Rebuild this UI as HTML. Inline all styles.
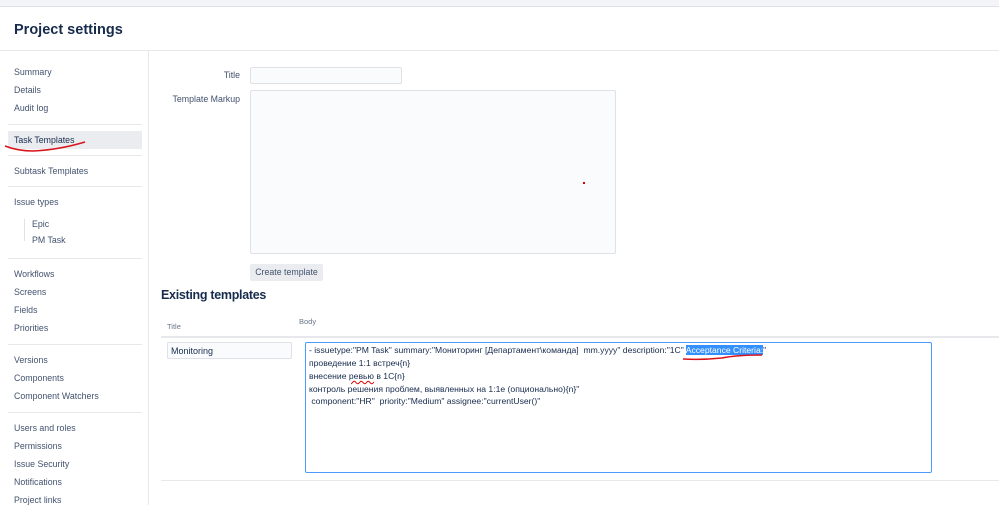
<!DOCTYPE html>
<html><head><meta charset="utf-8"><style>
*{margin:0;padding:0;box-sizing:border-box}
body{width:999px;height:505px;overflow:hidden;background:#fff;font-family:"Liberation Sans","Noto Sans CJK SC",sans-serif;color:#42526e;position:relative}
.a{position:absolute;white-space:nowrap}
.s{font-size:8.8px;color:#42526e;left:14px}
.hr{position:absolute;height:1px;background:#e6e8ec}
.lbl{font-size:8.8px;color:#42526e;text-align:right;width:100px}
.bt{font-size:8.6px;color:#172b4d;left:309px}
</style></head><body>
<div class="a" style="left:0;top:0;width:999px;height:6px;background:#f4f5f7"></div>
<div class="hr" style="left:0;top:6px;width:999px;background:#dfe1e6"></div>
<div class="a" style="left:14px;top:22px;font-size:14.5px;font-weight:bold;color:#172b4d">Project settings</div>
<div class="hr" style="left:0;top:50px;width:999px"></div>
<div class="a" style="left:148px;top:51px;width:1px;height:454px;background:#e6e8ec"></div>

<div class="a s" style="top:67px">Summary</div>
<div class="a s" style="top:85px">Details</div>
<div class="a s" style="top:103px">Audit log</div>
<div class="hr" style="left:8px;top:124px;width:134px"></div>
<div class="a" style="left:8px;top:131px;width:134px;height:18px;background:#ebecf0"></div>
<div class="a s" style="top:135px;color:#172b4d">Task Templates</div>
<svg class="a" style="left:3px;top:139px" width="85" height="16"><path d="M2 7 Q15 12 30 12 Q55 11 82 3" stroke="#d8141b" stroke-width="1.5" fill="none"/></svg>
<div class="hr" style="left:8px;top:155px;width:134px"></div>
<div class="a s" style="top:166px">Subtask Templates</div>
<div class="hr" style="left:8px;top:186px;width:134px"></div>
<div class="a s" style="top:197px">Issue types</div>
<div class="a" style="left:24px;top:219px;width:1px;height:22px;background:#dfe1e6"></div>
<div class="a s" style="left:32px;top:219px">Epic</div>
<div class="a s" style="left:32px;top:235px">PM Task</div>
<div class="hr" style="left:8px;top:258px;width:134px"></div>
<div class="a s" style="top:269px">Workflows</div>
<div class="a s" style="top:287px">Screens</div>
<div class="a s" style="top:305px">Fields</div>
<div class="a s" style="top:323px">Priorities</div>
<div class="hr" style="left:8px;top:344px;width:134px"></div>
<div class="a s" style="top:355px">Versions</div>
<div class="a s" style="top:373px">Components</div>
<div class="a s" style="top:391px">Component Watchers</div>
<div class="hr" style="left:8px;top:412px;width:134px"></div>
<div class="a s" style="top:423px">Users and roles</div>
<div class="a s" style="top:441px">Permissions</div>
<div class="a s" style="top:459px">Issue Security</div>
<div class="a s" style="top:477px">Notifications</div>
<div class="a s" style="top:495px">Project links</div>

<div class="a lbl" style="left:140px;top:70px">Title</div>
<div class="a" style="left:250px;top:67px;width:152px;height:17px;border:1px solid #dfe1e6;border-radius:2px;background:#fafbfc"></div>
<div class="a lbl" style="left:140px;top:94px">Template Markup</div>
<div class="a" style="left:250px;top:90px;width:366px;height:164px;border:1px solid #dfe1e6;border-radius:2px;background:#fafbfc"></div>
<div class="a" style="left:583px;top:182px;width:2px;height:2px;background:#d00"></div>
<div class="a" style="left:250px;top:264px;width:73px;height:17px;background:#ebecf0;border-radius:2px;font-size:8.8px;color:#42526e;text-align:center;line-height:17px">Create template</div>
<div class="a" style="left:161px;top:288px;font-size:12.5px;color:#172b4d;font-weight:bold;letter-spacing:-0.3px">Existing templates</div>
<div class="a" style="left:167px;top:322px;font-size:7.5px;color:#6b778c">Title</div>
<div class="a" style="left:299px;top:317px;font-size:7.5px;color:#6b778c">Body</div>
<div class="hr" style="left:161px;top:336px;width:838px;height:2px"></div>
<div class="a" style="left:167px;top:342px;width:125px;height:17px;border:1px solid #dfe1e6;border-radius:2px;background:#fafbfc;font-size:9px;color:#172b4d;padding:3px 3px;line-height:10px">Monitoring</div>
<div class="a" style="left:305px;top:342px;width:627px;height:131px;border:1px solid #4c9aff;border-radius:2px;background:#fff"></div>
<div class="a bt" style="top:345px">- issuetype:"PM Task" summary:"Мониторинг [Департамент\команда]&nbsp; mm.yyyy" description:"1C" <span style="background:#3390ff;color:#fff">Acceptance Criteria:</span>"</div>
<div class="a bt" style="top:358px">проведение 1:1 встреч{n}</div>
<div class="a bt" style="top:371px">внесение <span style="text-decoration:underline wavy #d00">ревью</span> в 1С{n}</div>
<div class="a bt" style="top:384px">контроль решения проблем, выявленных на 1:1е (опционально){n}"</div>
<div class="a bt" style="top:396px">&nbsp;component:"HR"&nbsp; priority:"Medium" assignee:"currentUser()"</div>
<svg class="a" style="left:682px;top:352px" width="82" height="10"><path d="M1 7 Q20 8 40 6 Q55 3 80 3" stroke="#d8141b" stroke-width="1.5" fill="none"/></svg>
<div class="hr" style="left:161px;top:480px;width:838px"></div>
</body></html>
